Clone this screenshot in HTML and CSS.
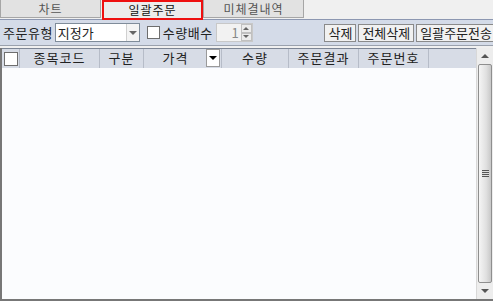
FILE: index.html
```html
<!DOCTYPE html>
<html>
<head>
	<title>일괄주문</title>
	<meta charset="utf-8">
	<link rel="stylesheet" href="styles.css">
</head>
<body>
	<div id="frame">
		<div class="tabs">
			<div class="tab">차트</div>
			<div class="tab active">일괄주문</div>
			<div class="tab">미체결내역</div>
		</div>
		<div class="toolbar">
			<span class="label">주문유형</span>
			<div class="combo">
				<span class="combo-text">지정가</span>
				<span class="combo-btn"><span class="tri"></span></span>
			</div>
			<span class="check"></span>
			<span class="label">수량배수</span>
			<div class="spin">
				<span class="spin-val">1</span>
				<span class="spin-btns">
					<span class="spin-up"><span class="tri-up"></span></span>
					<span class="spin-down"><span class="tri"></span></span>
				</span>
			</div>
			<div class="buttons">
				<button>삭제</button>
				<button>전체삭제</button>
				<button>일괄주문전송</button>
			</div>
		</div>
		<div class="grid">
			<div class="main">
				<div class="header">
					<div class="col c-chk"><span class="check"></span></div>
					<div class="col c-code">종목코드</div>
					<div class="col c-kind">구분</div>
					<div class="col c-price">가격<span class="hdr-btn"><span class="tri black"></span></span></div>
					<div class="col c-qty">수량</div>
					<div class="col c-res">주문결과</div>
					<div class="col c-no">주문번호</div>
					<div class="col c-rest"></div>
				</div>
				<div class="rows"></div>
			</div>
			<div class="scroll">
				<div class="sb-arrow"><span class="tri-up gray"></span></div>
				<div class="thumb"><span class="grip"></span></div>
				<div class="sb-arrow"><span class="tri gray"></span></div>
			</div>
		</div>
	</div>
</body>
</html>
```

FILE: styles.css
```css
* {
	box-sizing: border-box;
}
body, html {
	margin: 0px;
	height: 100%;
	font-family: "Noto Sans CJK KR", "DejaVu Sans", sans-serif;
	font-size: 12px;
	color: #222;
	background: #f0f0f0;
	overflow: hidden;
}
#frame {
	height: 301px;
	width: 493px;
	display: flex;
	flex-direction: column;
	overflow: hidden;
}
.tabs {
	display: flex;
	height: 20px;
	border-bottom: 1px solid #8c97b1;
	align-items: flex-start;
}
.tab {
	width: 101px;
	height: 18px;
	line-height: 17px;
	text-align: center;
	color: #555;
	font-size: 12px;
	letter-spacing: 1px;
	background: #e2e2e2;
	border: 1px solid #a6a6a6;
	border-top: none;
}
.tab.active {
	height: 20px;
	margin: 0px 0px 0px 1px;
	background: #ececec;
	color: #111;
	border: 2px solid #ee1010;
	line-height: 16px;
}
.toolbar {
	display: flex;
	align-items: center;
	height: 26px;
	background: #d4dbe8;
	border-bottom: 1px solid #9aa1ad;
	padding: 0px 0px 0px 3px;
}
.label {
	font-size: 13px;
	letter-spacing: 0.5px;
	color: #222;
}
.combo {
	display: flex;
	margin-left: 2px;
	width: 85px;
	height: 19px;
	background: white;
	border: 1px solid #7f8c9a;
}
.combo-text {
	flex: 1;
	font-size: 13px;
	line-height: 17px;
	padding-left: 2px;
}
.combo-btn, .spin-up, .spin-down, .hdr-btn {
	display: flex;
	align-items: center;
	justify-content: center;
}
.combo-btn {
	width: 13px;
	background: #f4f4f4;
	border-left: 1px solid #d0d0d0;
}
.tri {
	width: 0px;
	height: 0px;
	border-left: 4px solid transparent;
	border-right: 4px solid transparent;
	border-top: 4px solid #666;
}
.tri-up {
	width: 0px;
	height: 0px;
	border-left: 3px solid transparent;
	border-right: 3px solid transparent;
	border-bottom: 3px solid #666;
}
.tri.black {
	border-top-color: #000;
}
.tri.gray {
	border-top-color: #555;
}
.tri-up.gray {
	border-left-width: 4px;
	border-right-width: 4px;
	border-bottom: 4px solid #555;
}
.check {
	display: inline-block;
	width: 13px;
	height: 13px;
	background: white;
	border: 1px solid #6e6e6e;
}
.toolbar .check {
	margin: 0px 3px 0px 7px;
}
.spin {
	display: flex;
	margin-left: 3px;
	width: 37px;
	height: 19px;
	background: #f2f2f2;
	border: 1px solid #c8c8c8;
}
.spin-val {
	flex: 1;
	text-align: right;
	color: #888;
	font-size: 13px;
	line-height: 17px;
	padding-right: 2px;
}
.spin-btns {
	display: flex;
	flex-direction: column;
	width: 11px;
}
.spin-up, .spin-down {
	flex: 1;
	background: #ececec;
	border: 1px solid #c0c0c0;
}
.spin-down .tri {
	border-left-width: 3px;
	border-right-width: 3px;
	border-top-width: 3px;
}
.buttons {
	display: flex;
	margin-left: auto;
	margin-right: -3px;
	gap: 2px;
	flex-shrink: 0;
}
button {
	font-family: inherit;
	font-size: 13px;
	color: #222;
	height: 18px;
	padding: 0px 3px;
	line-height: 14px;
	background: #f1f1f1;
	border: 1px solid #8a8a8a;
}
.grid {
	flex: 1;
	display: flex;
	margin-top: 2px;
	border-left: 2px solid #777;
	border-bottom: 2px solid #777;
	background: #fbfcfe;
}
.main {
	flex: 1;
	display: flex;
	flex-direction: column;
}
.header {
	display: flex;
	height: 20px;
	background: #d7dce6;
	border-top: 1px solid #7c8595;
}
.col {
	font-size: 13px;
	line-height: 18px;
	text-align: center;
	border-right: 1px solid #b6bcc8;
	letter-spacing: 1px;
}
.c-chk { width: 18px; display: flex; align-items: center; justify-content: center; }
.c-chk .check { width: 14px; height: 14px; }
.c-code { width: 80px; }
.c-kind { width: 44px; }
.c-price { width: 78px; position: relative; padding-right: 14px; }
.c-qty { width: 67px; }
.c-res { width: 70px; }
.c-no { width: 70px; }
.c-rest { flex: 1; border-right: none; }
.hdr-btn {
	position: absolute;
	right: 1px;
	top: 0px;
	width: 14px;
	height: 18px;
	background: white;
	border: 1px solid #9a9a9a;
}
.rows {
	flex: 1;
}
.scroll {
	width: 17px;
	display: flex;
	flex-direction: column;
	background: #ededed;
	border-left: 1px solid #d8d8d8;
}
.sb-arrow {
	height: 16px;
	display: flex;
	align-items: center;
	justify-content: center;
}
.thumb {
	flex: 1;
	margin: 0px 1px;
	background: linear-gradient(to right, #f5f5f5, #e0e0e0 60%, #c8c8c8);
	border: 1px solid #8e8e8e;
	border-radius: 2px;
	display: flex;
	align-items: center;
	justify-content: center;
}
.grip {
	width: 7px;
	height: 7px;
	background: repeating-linear-gradient(to bottom, #555 0px, #555 1px, #ddd 1px, #ddd 2px);
}
```
